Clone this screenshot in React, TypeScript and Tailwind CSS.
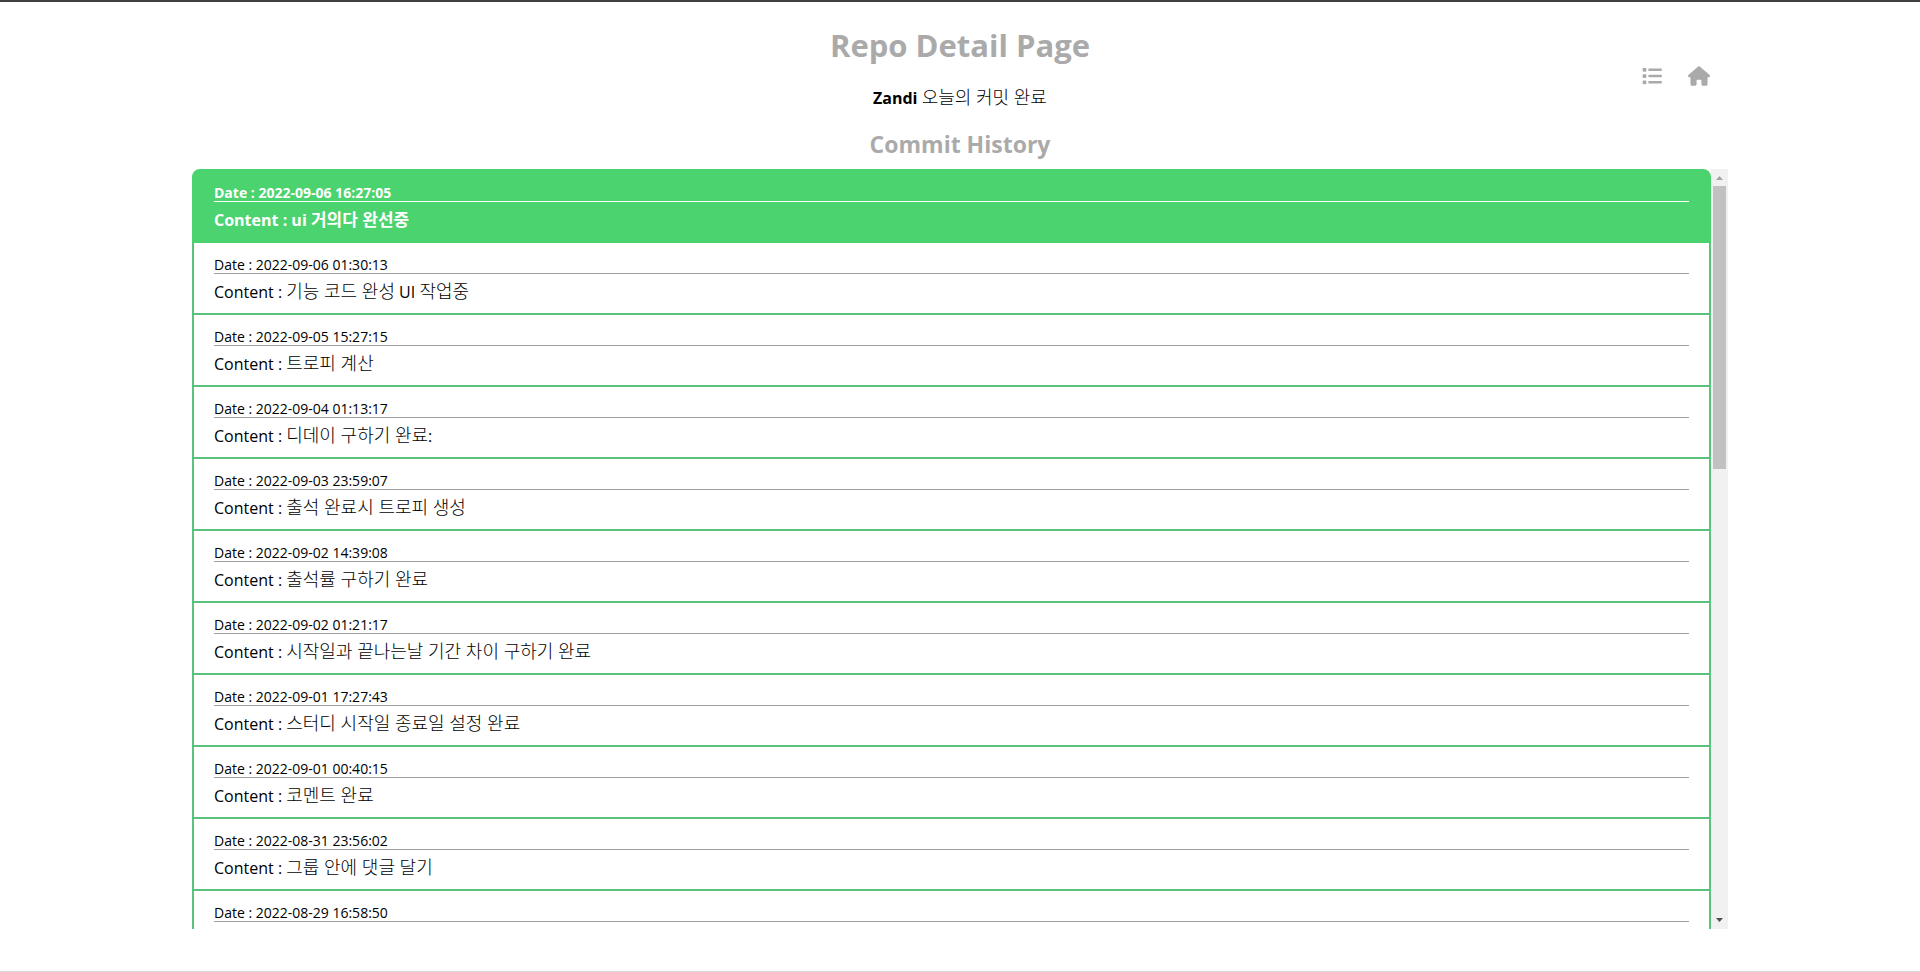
import { Fragment } from 'react';
import { FaHouse, FaList } from 'react-icons/fa6';

type Commit = { date: string; content?: string };

const commits: Commit[] = [
  { date: '2022-09-06 16:27:05', content: 'ui 거의다 완선중' },
  { date: '2022-09-06 01:30:13', content: '기능 코드 완성 UI 작업중' },
  { date: '2022-09-05 15:27:15', content: '트로피 계산' },
  { date: '2022-09-04 01:13:17', content: '디데이 구하기 완료:' },
  { date: '2022-09-03 23:59:07', content: '출석 완료시 트로피 생성' },
  { date: '2022-09-02 14:39:08', content: '출석률 구하기 완료' },
  { date: '2022-09-02 01:21:17', content: '시작일과 끝나는날 기간 차이 구하기 완료' },
  { date: '2022-09-01 17:27:43', content: '스터디 시작일 종료일 설정 완료' },
  { date: '2022-09-01 00:40:15', content: '코멘트 완료' },
  { date: '2022-08-31 23:56:02', content: '그룹 안에 댓글 달기' },
  { date: '2022-08-29 16:58:50' },
];

/* Hangul runs are set one step larger than the Latin text beside them. */
function Mixed({ text, bold = false }: { text: string; bold?: boolean }) {
  return (
    <>
      {text.split(/([가-힣]+(?: [가-힣]+)*)/).map((part, i) =>
        i % 2 ? (
          <span
            key={i}
            className={bold ? 'text-[17px] leading-none' : 'text-lg leading-none font-light'}
          >
            {part}
          </span>
        ) : (
          <Fragment key={i}>{part}</Fragment>
        ),
      )}
    </>
  );
}

function CommitItem({ commit, latest }: { commit: Commit; latest: boolean }) {
  return (
    <li
      className={
        latest
          ? 'h-[74px] shrink-0 rounded-t-lg border-2 border-[#4ad36e] bg-[#4ad36e] px-5 pt-3 font-bold text-white'
          : 'h-[72px] shrink-0 border-2 border-t-0 border-[#5bc17c] px-5 pt-3'
      }
    >
      <p
        className={
          latest
            ? 'h-[19px] border-b border-white text-sm leading-5'
            : 'h-[19px] border-b border-[#a0a0a0] text-sm leading-5'
        }
      >
        Date : {commit.date}
      </p>
      {commit.content && (
        <p className="mt-1 text-base leading-7">
          Content : <Mixed text={commit.content} bold={latest} />
        </p>
      )}
    </li>
  );
}

function ScrollTrack() {
  return (
    <div aria-hidden="true" className="flex w-[17px] shrink-0 flex-col items-center bg-[#f1f1f1]">
      <svg className="h-[17px] w-[17px] shrink-0" viewBox="0 0 17 17">
        <path d="M5 11h7L8.500 7z" fill="#a3a3a3" />
      </svg>
      <div className="flex w-full min-h-0 flex-1 flex-col items-center">
        <div className="h-[39%] w-[13px] bg-[#c1c1c1]" />
      </div>
      <svg className="h-[17px] w-[17px] shrink-0" viewBox="0 0 17 17">
        <path d="M5 6h7L8.500 10z" fill="#505050" />
      </svg>
    </div>
  );
}

export default function App() {
  return (
    <div className="flex h-dvh flex-col border-t-2 border-b border-t-[#404040] border-b-[#d9d9d9] bg-white pb-[42px] font-['Open_Sans','Noto_Sans_CJK_KR',sans-serif] text-black">
      <header className="mx-auto grid w-4/5 grid-cols-[1fr_auto_1fr] pt-[19px]">
        <div className="col-start-2 text-center">
          <h1 className="text-[31px] leading-12 font-bold text-[#aaaaaa]">Repo Detail Page</h1>
          <p className="mt-[15px] text-base leading-7">
            <strong className="font-bold">Zandi</strong> <Mixed text="오늘의 커밋 완료" />
          </p>
          <h2 className="mt-3.5 mb-[7px] text-[23px] leading-9 font-bold text-[#aaaaaa]">
            Commit History
          </h2>
        </div>
        <nav className="flex items-start justify-end gap-[26px] pt-[43px] pr-[18px] text-[#aaaaaa]">
          <a href="#list" aria-label="Repository list" className="flex h-6 items-center">
            <FaList className="size-5" />
          </a>
          <a href="#home" aria-label="Home" className="flex h-6 items-center">
            <FaHouse className="size-[22px]" />
          </a>
        </nav>
      </header>
      <main className="mx-auto flex min-h-0 w-4/5 flex-1">
        <ul className="flex min-w-0 flex-1 flex-col overflow-y-auto [scrollbar-width:none]">
          {commits.map((commit, i) => (
            <CommitItem key={commit.date} commit={commit} latest={i === 0} />
          ))}
        </ul>
        <ScrollTrack />
      </main>
    </div>
  );
}
